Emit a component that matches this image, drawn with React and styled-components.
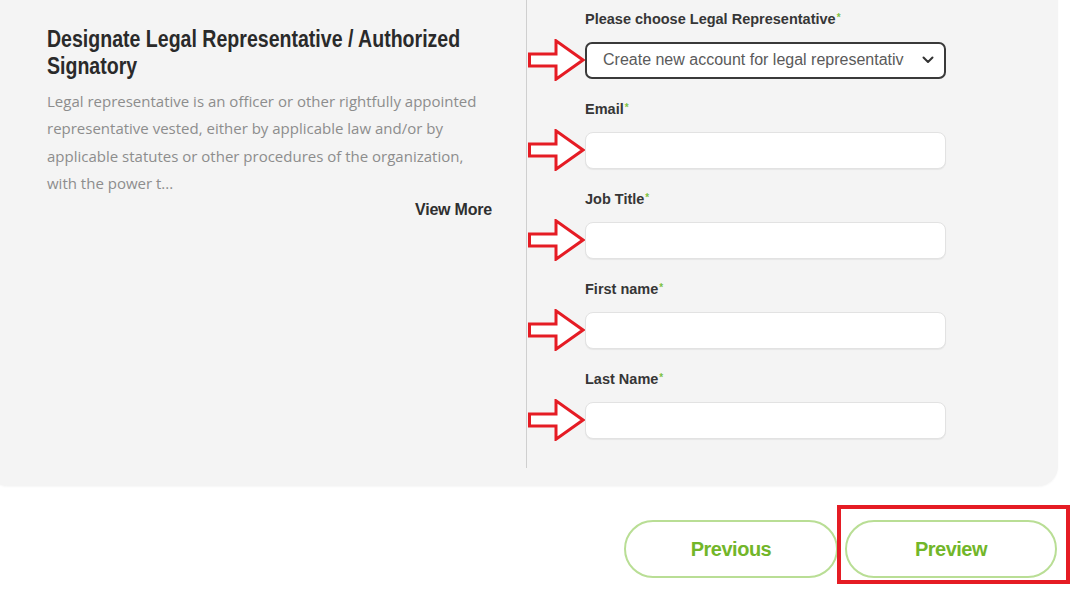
import React from "react";
import styled, { createGlobalStyle } from "styled-components";

const Global = createGlobalStyle`
  html, body { margin: 0; padding: 0; background: #ffffff; }
  body { font-family: "Liberation Sans", Arial, sans-serif; overflow: hidden; }
  * { box-sizing: border-box; }
`;

const Page = styled.div`
  width: 1080px;
  height: 592px;
  overflow: hidden;
`;

const Card = styled.section`
  display: flex;
  width: 1070px;
  margin: -20px 0 0 -12px;
  padding-bottom: 18px;
  background: #f4f4f4;
  border-radius: 20px;
  box-shadow: 0 1px 2px rgba(0, 0, 0, 0.04);
`;

const Intro = styled.div`
  width: 538px;
  padding: 46px 34px 0 59px;
  display: flex;
  flex-direction: column;
`;

const Title = styled.h2`
  margin: 0;
  width: 500px;
  font-family: "Liberation Sans", Arial, sans-serif;
  font-size: 23px;
  line-height: 27px;
  font-weight: 700;
  color: #2a2a2a;
  transform: scaleX(0.85);
  transform-origin: left center;
`;

const Description = styled.p`
  margin: 8px 0 0;
  width: 445px;
  font-family: "Open Sans", sans-serif;
  font-size: 15px;
  line-height: 27.3px;
  color: #8d8d8d;
`;

const ViewMore = styled.a`
  align-self: flex-end;
  margin-top: 3px;
  font-family: "Liberation Sans", Arial, sans-serif;
  font-size: 16px;
  line-height: 20px;
  font-weight: 700;
  color: #2f2f2f;
  letter-spacing: -0.2px;
  cursor: pointer;
`;

const Form = styled.div`
  flex: 1;
  border-left: 1px solid #cfcfcf;
  padding: 28px 0 27px 0;
  display: flex;
  flex-direction: column;
  gap: 17px;
`;

const Field = styled.div`
  display: flex;
  flex-direction: column;
  gap: 10px;
`;

const Label = styled.label`
  padding-left: 58px;
  font-family: "Liberation Sans", Arial, sans-serif;
  font-size: 14.5px;
  line-height: 20px;
  font-weight: 700;
  color: #363636;
`;

const Req = styled.span`
  color: #7cc242;
  font-size: 10px;
  vertical-align: 3px;
  margin-left: 1px;
`;

const Row = styled.div`
  display: flex;
  align-items: center;
  padding-left: 1px;
`;

const ArrowMark = styled.svg`
  width: 57px;
  height: 42px;
  flex: none;
`;

const TextInput = styled.div`
  width: 361px;
  height: 37px;
  background: #ffffff;
  border: 1px solid #e2e2e2;
  border-radius: 8px;
  box-shadow: 0 1px 1px rgba(0, 0, 0, 0.06);
`;

const Select = styled.div`
  width: 361px;
  height: 37px;
  background: #ffffff;
  border: 2px solid #3a3a3a;
  border-radius: 7px;
  display: flex;
  align-items: center;
  padding: 0 10px 0 16px;
  gap: 18px;
`;

const SelectText = styled.span`
  flex: 1;
  overflow: hidden;
  white-space: nowrap;
  font-family: "Liberation Sans", Arial, sans-serif;
  font-size: 16px;
  color: #5a5a5a;
`;

const Actions = styled.div`
  display: flex;
  justify-content: flex-end;
  gap: 7px;
  padding: 34px 23px 0 0;
`;

const Button = styled.button`
  position: relative;
  width: ${(p) => p.$w}px;
  height: 58px;
  border: 2px solid #b9de95;
  border-radius: 29px;
  background: #ffffff;
  font-family: "Liberation Sans", Arial, sans-serif;
  font-size: 20px;
  letter-spacing: -0.5px;
  font-weight: 700;
  color: #72b629;
  cursor: pointer;
`;

const Highlight = styled.span`
  position: absolute;
  top: -17px;
  left: -10px;
  right: -15px;
  bottom: -8px;
  border: 4px solid #e51c24;
  pointer-events: none;
`;

function Arrow() {
  return (
    <ArrowMark viewBox="0 0 57 42">
      <polygon
        points="1.5,15 28,15 28,1.8 55,21 28,40.2 28,27 1.5,27"
        fill="#ffffff"
        stroke="#e51c24"
        strokeWidth="3"
        strokeLinejoin="miter"
      />
    </ArrowMark>
  );
}

function Chevron() {
  return (
    <svg width="12" height="8" viewBox="0 0 12 8">
      <path d="M1.5 1.5 L6 6 L10.5 1.5" fill="none" stroke="#333" strokeWidth="2" strokeLinecap="round" strokeLinejoin="round" />
    </svg>
  );
}

const fields = ["Email", "Job Title", "First name", "Last Name"];

export default function App() {
  return (
    <Page>
      <Global />
      <Card>
        <Intro>
          <Title>Designate Legal Representative / Authorized Signatory</Title>
          <Description>
            Legal representative is an officer or other rightfully appointed
            representative vested, either by applicable law and/or by
            applicable statutes or other procedures of the organization,
            with the power t...
          </Description>
          <ViewMore>View More</ViewMore>
        </Intro>
        <Form>
          <Field>
            <Label>
              Please choose Legal Representative<Req>*</Req>
            </Label>
            <Row>
              <Arrow />
              <Select>
                <SelectText>Create new account for legal representative</SelectText>
                <Chevron />
              </Select>
            </Row>
          </Field>
          {fields.map((f) => (
            <Field key={f}>
              <Label>
                {f}
                <Req>*</Req>
              </Label>
              <Row>
                <Arrow />
                <TextInput />
              </Row>
            </Field>
          ))}
        </Form>
      </Card>
      <Actions>
        <Button $w={214}>Previous</Button>
        <Button $w={212}>
          Preview
          <Highlight />
        </Button>
      </Actions>
    </Page>
  );
}
